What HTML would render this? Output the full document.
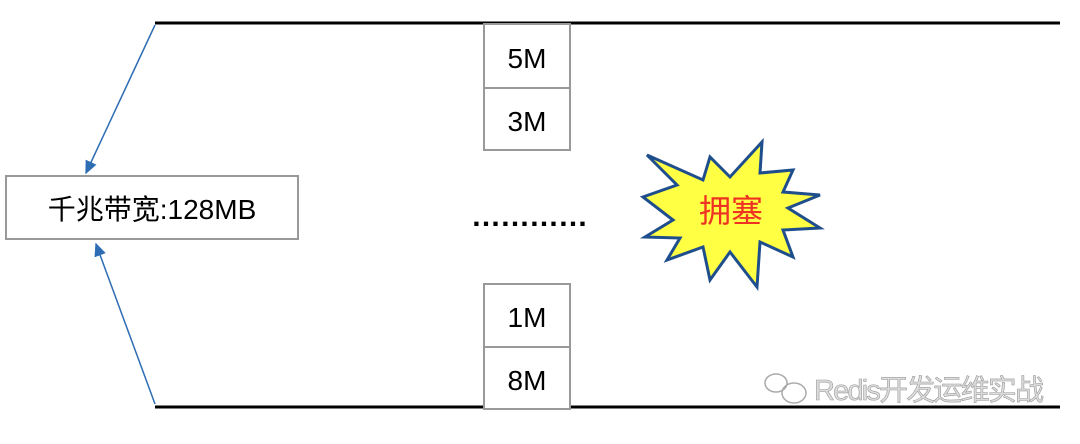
<!DOCTYPE html><html><head><meta charset="utf-8"><style>body{margin:0;background:#fff}
svg text{font-family:"Liberation Sans","Noto Sans CJK SC",sans-serif}</style></head><body>
<svg width="1080" height="439" viewBox="0 0 1080 439">
<defs><marker id="a" markerWidth="10" markerHeight="10" refX="8" refY="5" orient="auto"><path d="M0,1 L9,5 L0,9 z" fill="#2e6db4"/></marker></defs>
<line x1="155" y1="23" x2="1060" y2="23" stroke="#000" stroke-width="3"/>
<line x1="155" y1="407" x2="1060" y2="407" stroke="#000" stroke-width="3"/>
<line x1="155" y1="25" x2="86" y2="173" stroke="#2e6db4" stroke-width="1.5" marker-end="url(#a)"/>
<line x1="155" y1="404" x2="96" y2="244" stroke="#2e6db4" stroke-width="1.5" marker-end="url(#a)"/>
<rect x="6" y="176" width="292" height="63" fill="#fff" stroke="#999" stroke-width="2"/>
<text x="152" y="219" font-size="28" text-anchor="middle">千兆带宽:128MB</text>
<g fill="#fff" stroke="#999" stroke-width="2">
<rect x="484" y="24" width="86" height="64"/><rect x="484" y="88" width="86" height="62"/>
<rect x="484" y="284" width="86" height="63"/><rect x="484" y="347" width="86" height="62"/></g>
<g font-size="28" text-anchor="middle"><text x="527" y="68">5M</text><text x="527" y="131">3M</text><text x="527" y="327">1M</text><text x="527" y="390">8M</text></g>
<text x="529" y="226" font-size="30" text-anchor="middle" font-weight="bold" letter-spacing="-1">…………</text>
<polygon points="647,155 703,180 710,157 730,177 762,142 760,173 793,170 783,192 820,195 788,208 820,228 783,230 793,257 760,242 757,287 730,252 710,280 703,247 667,260 680,238 645,237 673,220 643,197 677,185" fill="#ffff44" stroke="#1f4e8c" stroke-width="3" stroke-linejoin="miter"/>
<text x="731" y="222" font-size="32" fill="#e32" text-anchor="middle" font-family="Noto Serif CJK SC">拥塞</text>
<text x="814" y="400" font-size="29" fill="#ddd" stroke="#999" stroke-width="0.6" textLength="230">Redis开发运维实战</text>
<g fill="none" stroke="#aaa" stroke-width="1.5"><ellipse cx="776" cy="383" rx="11" ry="9"/><ellipse cx="794" cy="393" rx="12" ry="10"/></g>
</svg></body></html>
